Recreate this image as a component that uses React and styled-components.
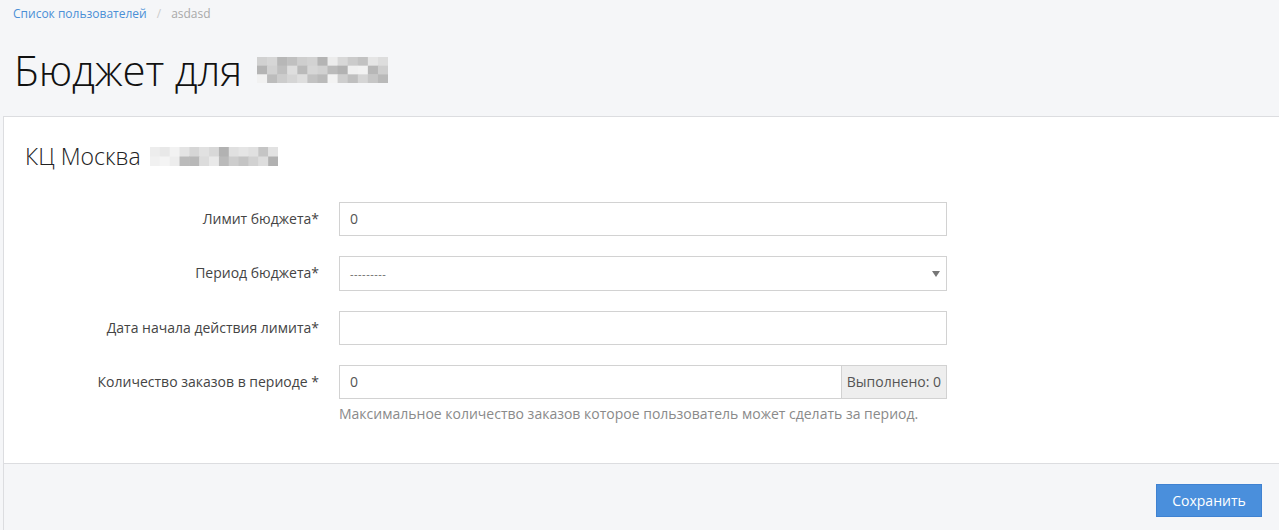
import React from "react";
import styled, { createGlobalStyle } from "styled-components";

const Global = createGlobalStyle`
  html, body { margin: 0; padding: 0; }
  body {
    background: #f5f6f8;
    font-family: "Open Sans", "Liberation Sans", sans-serif;
    color: #333;
  }
`;

const Page = styled.div`
  width: 1279px;
  height: 530px;
  overflow: hidden;
  background: #f5f6f8;
`;

const Breadcrumbs = styled.nav`
  display: flex;
  align-items: center;
  gap: 9px;
  padding: 3px 0 0 13px;
  height: 20px;
  font-size: 12px;
  line-height: 17px;
`;

const Crumb = styled.a`
  color: ${(p) => (p.$active ? "#a9a9a9" : "#4a8fd6")};
  text-decoration: none;
`;

const Sep = styled.span`
  color: #ccc;
  padding: 0 1px;
`;

const Title = styled.h1`
  display: flex;
  align-items: center;
  gap: 15px;
  margin: 0;
  padding: 20px 0 0 14px;
  height: 74px;
  box-sizing: border-box;
  font-size: 42px;
  font-weight: 300;
  color: #111;
  letter-spacing: -0.2px;
  line-height: 56px;
`;

const Card = styled.section`
  margin: 19px 0 0 3px;
  border-left: 1px solid #dcdde0;
  border-top: 1px solid #dcdde0;
  background: #fff;
`;

const CardBody = styled.div`
  padding: 24px 0 40px 0;
`;

const CardTitle = styled.h2`
  display: flex;
  align-items: center;
  gap: 9px;
  margin: 0 0 31px 21px;
  font-size: 23px;
  font-weight: 300;
  color: #222;
  line-height: 30px;
`;

const Form = styled.div`
  display: grid;
  grid-template-columns: 315px 608px;
  column-gap: 20px;
  row-gap: 20px;
`;

const Label = styled.label`
  text-align: right;
  font-size: 14px;
  color: #444;
  line-height: 34px;
  height: 34px;
`;

const Field = styled.div`
  display: flex;
  flex-direction: column;
`;

const Input = styled.div`
  box-sizing: border-box;
  height: 34px;
  border: 1px solid #d2d2d2;
  background: #fff;
  padding: 0 10px;
  font-size: 14px;
  line-height: 32px;
  color: #555;
  flex: 1;
  position: relative;
`;

const SelectText = styled.span`
  color: #666;
  font-size: 11px;
  letter-spacing: 0.5px;
`;

const Caret = styled.span`
  position: absolute;
  right: 6px;
  top: 14px;
  width: 0;
  height: 0;
  border-left: 4px solid transparent;
  border-right: 4px solid transparent;
  border-top: 6px solid #777;
`;

const Group = styled.div`
  display: flex;
  height: 34px;
`;

const Addon = styled.div`
  box-sizing: border-box;
  height: 34px;
  border: 1px solid #d2d2d2;
  margin-left: -1px;
  background: #eee;
  padding: 0 5px;
  font-size: 14px;
  line-height: 32px;
  color: #555;
  white-space: nowrap;
`;

const Help = styled.div`
  margin-top: 5px;
  font-size: 14px;
  color: #8a8a8a;
  line-height: 19px;
`;

const Footer = styled.div`
  border-top: 1px solid #dcdde0;
  background: #f5f6f8;
  height: 70px;
  display: flex;
  justify-content: flex-end;
  align-items: flex-start;
  padding: 20px 17px 0 0;
  box-sizing: border-box;
`;

const Button = styled.button`
  width: 106px;
  height: 33px;
  border: 1px solid #3f82d1;
  background: #4a8fdc;
  color: #fff;
  font-family: "Open Sans", "Liberation Sans", sans-serif;
  font-size: 14px;
  padding: 0;
  cursor: pointer;
`;

const Blur = ({ w, h, cols, rows, seed }) => {
  const cw = w / cols;
  const ch = h / rows;
  const cells = [];
  let s = seed;
  for (let r = 0; r < rows; r++) {
    for (let c = 0; c < cols; c++) {
      s = (s * 9301 + 49297) % 233280;
      const v = 175 + Math.floor((s / 233280) * 70);
      cells.push(
        <rect key={r + "-" + c} x={c * cw} y={r * ch} width={cw + 0.5} height={ch + 0.5} fill={`rgb(${v},${v},${v})`} />
      );
    }
  }
  return (
    <svg width={w} height={h} viewBox={`0 0 ${w} ${h}`}>
      {cells}
    </svg>
  );
};

export default function App() {
  return (
    <Page>
      <Global />
      <Breadcrumbs>
        <Crumb href="#">Список пользователей</Crumb>
        <Sep>/</Sep>
        <Crumb $active>asdasd</Crumb>
      </Breadcrumbs>
      <Title>
        Бюджет для
        <Blur w={131} h={26} cols={13} rows={3} seed={7} />
      </Title>
      <Card>
        <CardBody>
          <CardTitle>
            КЦ Москва
            <Blur w={128} h={19} cols={13} rows={2} seed={42} />
          </CardTitle>
          <Form>
            <Label>Лимит бюджета*</Label>
            <Field>
              <Input>0</Input>
            </Field>
            <Label>Период бюджета*</Label>
            <Field>
              <Input>
                <SelectText>---------</SelectText>
                <Caret />
              </Input>
            </Field>
            <Label>Дата начала действия лимита*</Label>
            <Field>
              <Input />
            </Field>
            <Label>Количество заказов в периоде *</Label>
            <Field>
              <Group>
                <Input>0</Input>
                <Addon>Выполнено: 0</Addon>
              </Group>
              <Help>Максимальное количество заказов которое пользователь может сделать за период.</Help>
            </Field>
          </Form>
        </CardBody>
        <Footer>
          <Button>Сохранить</Button>
        </Footer>
      </Card>
    </Page>
  );
}
